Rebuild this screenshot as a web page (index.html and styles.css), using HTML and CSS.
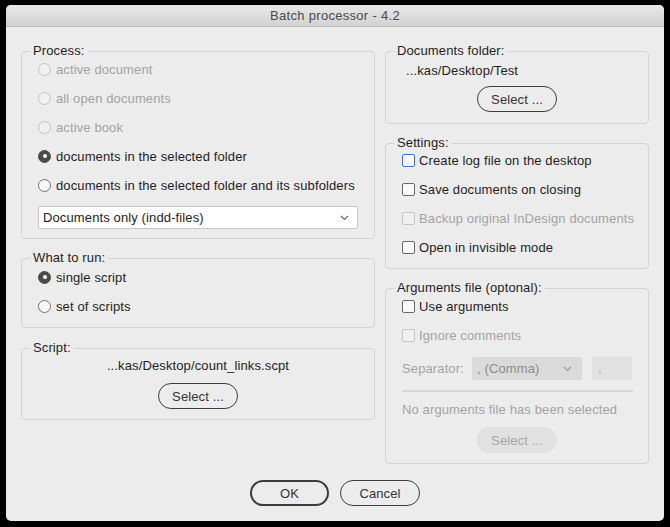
FILE: index.html
```html
<!DOCTYPE html>
<html lang="en">

<head>
    <meta charset="UTF-8">
    <meta name="viewport" content="width=device-width, initial-scale=1.0">
    <title>Batch processor - 4.2</title>
    <link rel="stylesheet" href="styles.css">
</head>

<body>
    <div class="window">
        <header class="titlebar">Batch processor - 4.2</header>

        <div class="content">
            <div class="col col-left">
                <fieldset class="panel panel-process">
                    <legend>Process:</legend>
                    <div class="opt disabled"><span class="radio"></span>active document</div>
                    <div class="opt disabled"><span class="radio"></span>all open documents</div>
                    <div class="opt disabled"><span class="radio"></span>active book</div>
                    <div class="opt"><span class="radio checked"></span>documents in the selected folder</div>
                    <div class="opt"><span class="radio"></span>documents in the selected folder and its subfolders</div>
                    <div class="select select-docs">
                        <span>Documents only (indd-files)</span>
                        <svg width="9" height="6" viewBox="0 0 9 6"><polyline points="1,1 4.5,4.5 8,1" fill="none" stroke="#6a6a6a" stroke-width="1.2"/></svg>
                    </div>
                </fieldset>

                <fieldset class="panel panel-run">
                    <legend>What to run:</legend>
                    <div class="opt"><span class="radio checked"></span>single script</div>
                    <div class="opt"><span class="radio"></span>set of scripts</div>
                </fieldset>

                <fieldset class="panel panel-script">
                    <legend>Script:</legend>
                    <div class="path center">...kas/Desktop/count_links.scpt</div>
                    <div class="btn-row"><button class="btn">Select ...</button></div>
                </fieldset>
            </div>

            <div class="col col-right">
                <fieldset class="panel panel-folder">
                    <legend>Documents folder:</legend>
                    <div class="path">...kas/Desktop/Test</div>
                    <div class="btn-row"><button class="btn">Select ...</button></div>
                </fieldset>

                <fieldset class="panel panel-settings">
                    <legend>Settings:</legend>
                    <div class="opt"><span class="check focus"></span>Create log file on the desktop</div>
                    <div class="opt"><span class="check"></span>Save documents on closing</div>
                    <div class="opt disabled"><span class="check"></span>Backup original InDesign documents</div>
                    <div class="opt"><span class="check"></span>Open in invisible mode</div>
                </fieldset>

                <fieldset class="panel panel-args">
                    <legend>Arguments file (optonal):</legend>
                    <div class="opt"><span class="check"></span>Use arguments</div>
                    <div class="opt disabled"><span class="check"></span>Ignore comments</div>
                    <div class="sep-row">
                        <span class="sep-label">Separator:</span>
                        <div class="select select-sep">
                            <span>, (Comma)</span>
                            <svg width="9" height="6" viewBox="0 0 9 6"><polyline points="1,1 4.5,4.5 8,1" fill="none" stroke="#9a9a9a" stroke-width="1.2"/></svg>
                        </div>
                        <div class="sep-box">,</div>
                    </div>
                    <div class="rule"></div>
                    <div class="note">No arguments file has been selected</div>
                    <div class="btn-row"><button class="btn btn-disabled">Select ...</button></div>
                </fieldset>
            </div>
        </div>

        <div class="actions">
            <button class="btn btn-default">OK</button>
            <button class="btn">Cancel</button>
        </div>
    </div>
</body>

</html>
```

FILE: styles.css
```css
body {
    margin: 0;
    background-color: #000;
    font-family: "Liberation Sans", Arial, sans-serif;
    font-size: 13px;
    letter-spacing: 0.12px;
    color: #1e1e1e;
}

.window {
    margin: 5px 6px;
    width: 658px;
    height: 516px;
    background-color: #ececec;
    border-radius: 5px;
    overflow: hidden;
    display: flex;
    flex-direction: column;
}

.titlebar {
    height: 21px;
    line-height: 21px;
    text-align: center;
    letter-spacing: 0.3px;
    color: #4a4a4a;
    background: linear-gradient(#e8e8e8, #d2d2d2);
    border-bottom: 1px solid #b9b9b9;
}

.content {
    display: flex;
    gap: 10px;
    padding: 16px 15px 0;
    align-items: flex-start;
}

.col {
    display: flex;
    flex-direction: column;
}

.col-left {
    width: 354px;
}

.col-right {
    width: 264px;
}

.panel {
    margin: 0;
    padding: 0 16px 10px;
    border: 1px solid #d4d4d4;
    border-radius: 4px;
    min-width: 0;
}

.panel legend {
    margin-left: -8px;
    padding: 0 3px;
    line-height: 16px;
    color: #1e1e1e;
}

.panel-process {
    padding-bottom: 9px;
}

.panel-run {
    margin-top: 11px;
    padding-bottom: 11px;
}

.panel-run .opt:first-of-type {
    margin-top: 1px;
}

.panel-script {
    margin-top: 12px;
}

.panel-folder {
    padding-bottom: 11px;
}

.panel-settings {
    margin-top: 11px;
    padding-bottom: 11px;
}

.panel-settings .opt:first-of-type {
    margin-top: -1px;
}

.panel-args {
    margin-top: 11px;
}

.opt {
    display: flex;
    align-items: center;
    gap: 5px;
    height: 20px;
    margin-bottom: 9px;
    white-space: nowrap;
}

.opt:last-child {
    margin-bottom: 0;
}

.panel-settings .opt,
.panel-args .opt {
    gap: 4px;
}

.disabled {
    color: #a3a3a3;
}

.radio {
    width: 13px;
    height: 13px;
    box-sizing: border-box;
    border: 1px solid #707070;
    border-radius: 50%;
    background-color: #fbfbfb;
    position: relative;
    flex: none;
}

.disabled .radio {
    border-color: #c2c2c2;
    background-color: #f0f0f0;
}

.radio.checked {
    background-color: #4b4b4b;
    border-color: #4b4b4b;
}

.radio.checked::after {
    content: "";
    position: absolute;
    left: 3.5px;
    top: 3.5px;
    width: 4px;
    height: 4px;
    border-radius: 50%;
    background-color: #fff;
}

.check {
    width: 13px;
    height: 13px;
    box-sizing: border-box;
    border: 1px solid #6a6a6a;
    border-radius: 2px;
    background-color: #fbfbfb;
    flex: none;
}

.check.focus {
    border-color: #3a6ee8;
}

.disabled .check {
    border-color: #c6c6c6;
    background-color: #f0f0f0;
}

.select {
    display: flex;
    align-items: center;
    justify-content: space-between;
    box-sizing: border-box;
    height: 23px;
}

.select-docs {
    margin-top: 11px;
    padding: 0 8px 0 4px;
    background-color: #fff;
    border: 1px solid #c6c6c6;
    border-radius: 2px;
}

.path {
    margin-top: 4px;
    line-height: 16px;
    padding-left: 4px;
}

.path.center {
    margin-top: 2px;
    text-align: center;
    padding-left: 0;
}

.btn-row {
    display: flex;
    justify-content: center;
    margin-top: 9px;
}

.panel-folder .btn-row {
    margin-top: 7px;
}

.btn {
    font-family: inherit;
    font-size: 13px;
    letter-spacing: 0.12px;
    color: #333;
    width: 80px;
    height: 26px;
    box-sizing: border-box;
    border: 1px solid #3c3c3c;
    border-radius: 13px;
    background-color: transparent;
    padding: 0;
}

.btn-disabled {
    border: none;
    background-color: #e1e1e1;
    color: #a6a6a6;
}

.btn-default {
    border-width: 2px;
    width: 79px;
}

.sep-row {
    display: flex;
    align-items: center;
    margin-top: 12px;
    height: 23px;
}

.sep-label {
    color: #a3a3a3;
    width: 70px;
}

.select-sep {
    width: 110px;
    padding: 0 10px 0 5px;
    background-color: #dadada;
    color: #8c8c8c;
    border-radius: 2px;
}

.sep-box {
    margin-left: 10px;
    width: 40px;
    height: 23px;
    line-height: 23px;
    padding-left: 6px;
    box-sizing: border-box;
    background-color: #e2e2e2;
    color: #b0b0b0;
    border-radius: 2px;
}

.rule {
    margin-top: 10px;
    height: 2px;
    width: 231px;
    background-color: #d6d6d6;
}

.note {
    margin-top: 10px;
    line-height: 16px;
    color: #a3a3a3;
}

.actions {
    display: flex;
    justify-content: center;
    gap: 11px;
    margin-top: 16px;
}
```
